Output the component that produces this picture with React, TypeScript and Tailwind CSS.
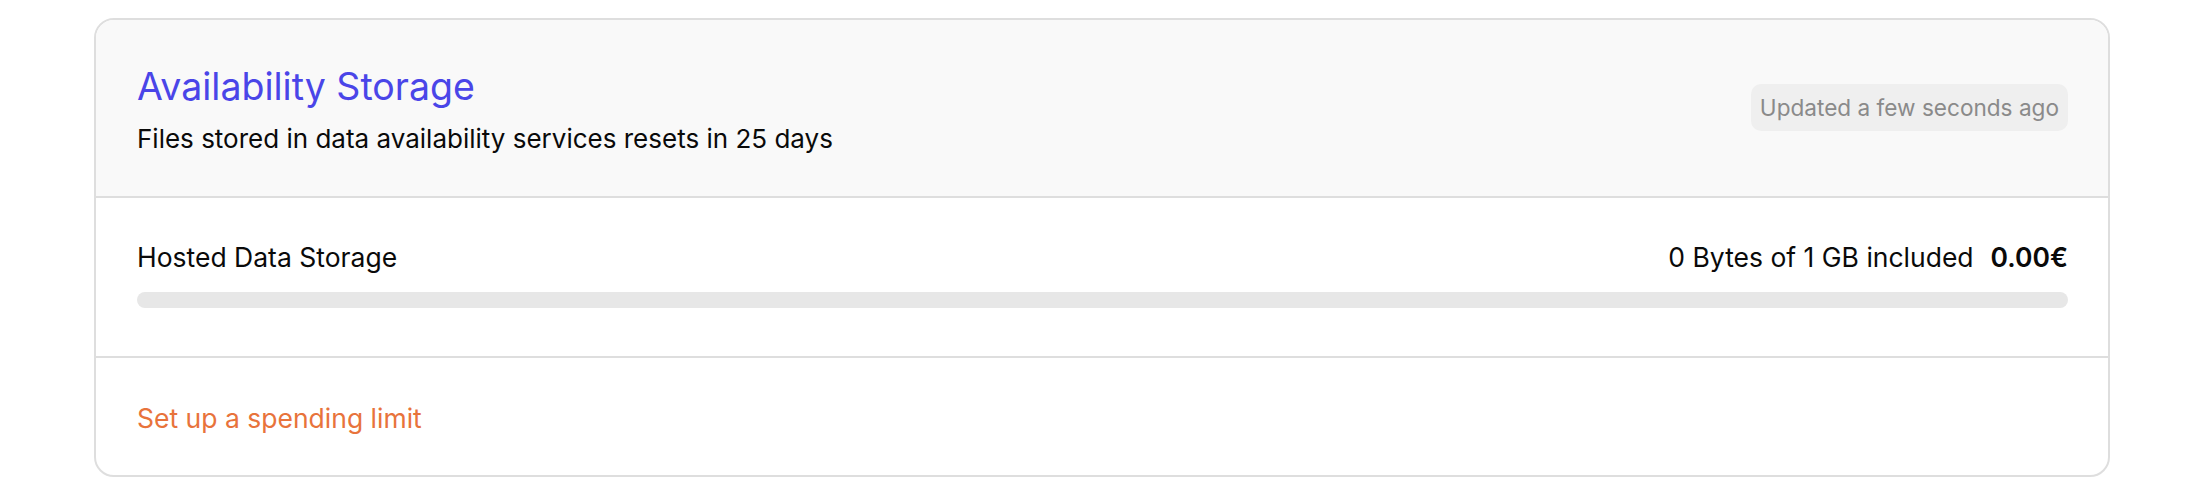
export default function App() {
  return (
    <div
      className="min-h-screen bg-white pt-[18px] pl-[94px]"
      style={{ fontFamily: 'Inter, "Noto Sans", sans-serif' }}
    >
      <div className="w-[2016px] rounded-[20px] border-2 border-[#dedede] overflow-hidden">
        {/* header */}
        <div className="flex items-center justify-between bg-[#f9f9f9] border-b-2 border-[#dedede] pl-[41px] pr-[40px] pt-[42px] pb-[38px]">
          <div className="flex flex-col gap-[8px]">
            <h2 className="text-[37.5px] leading-[50px] text-[#4a45e8]">Availability Storage</h2>
            <p className="text-[26px] leading-[38px] text-[#0a0a0a]">
              Files stored in data availability services resets in 25 days
            </p>
          </div>
          <span className="mb-[5px] flex h-[47px] items-center rounded-[10px] bg-[#efefef] px-[9px] text-[22.6px] text-[#8a8a8a]">
            Updated a few seconds ago
          </span>
        </div>

        {/* usage */}
        <div className="border-b-2 border-[#dedede] pl-[41px] pr-[40px] pt-[40px] pb-[48px]">
          <div className="flex items-baseline justify-between text-[26.5px] leading-[38px] text-[#0a0a0a]">
            <span>Hosted Data Storage</span>
            <div className="flex items-baseline gap-[17px]">
              <span>0 Bytes of 1 GB included</span>
              <span className="font-semibold">0.00€</span>
            </div>
          </div>
          <div className="mt-[16px] h-[16px] w-full rounded-full bg-[#e7e7e7]" />
        </div>

        {/* footer */}
        <div className="pl-[41px] pr-[40px] pt-[41px] pb-[38px]">
          <a href="#" className="text-[26.5px] leading-[38px] text-[#e8733b]">
            Set up a spending limit
          </a>
        </div>
      </div>
    </div>
  );
}
